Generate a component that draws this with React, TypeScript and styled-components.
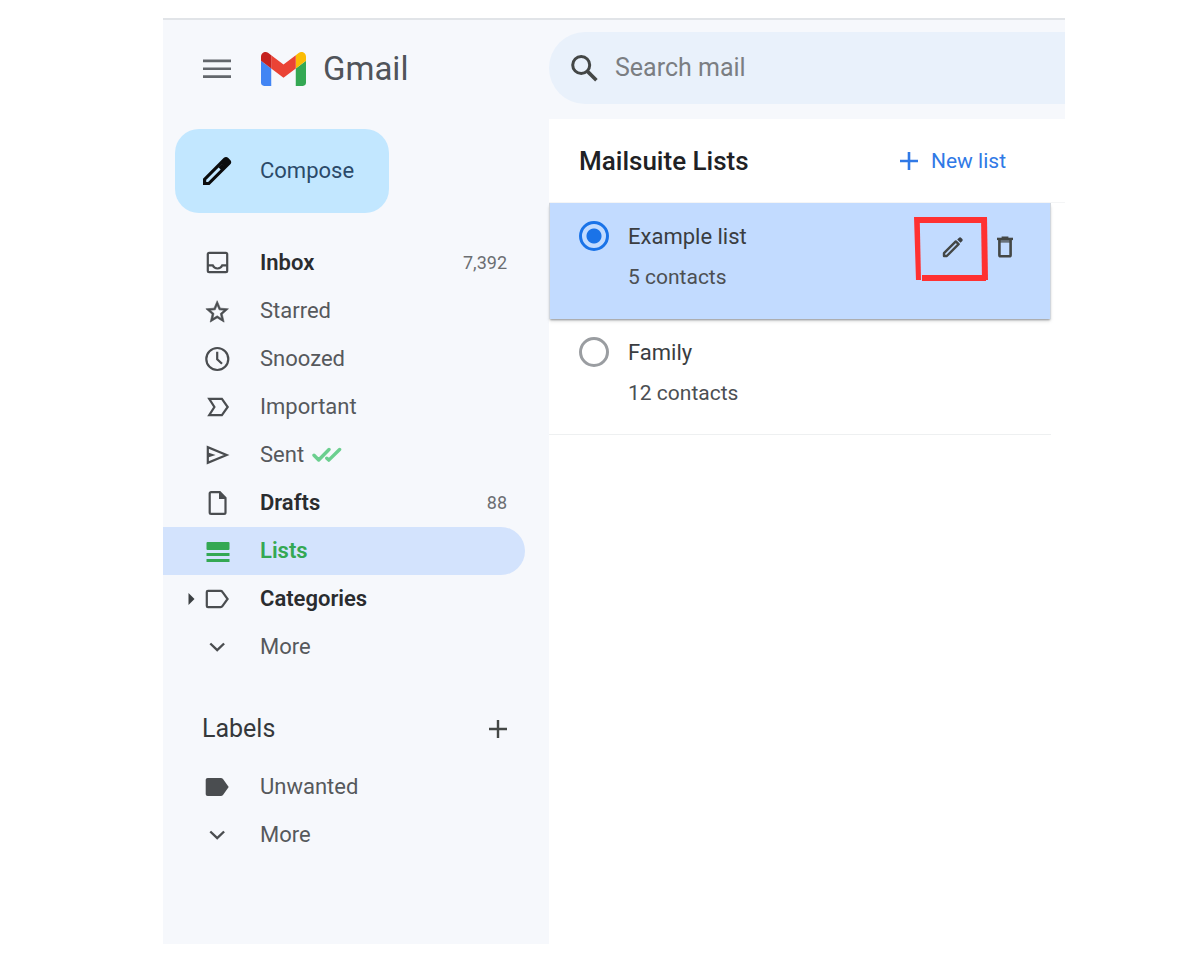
import React, { useState } from "react";
import styled, { createGlobalStyle } from "styled-components";

const GlobalStyle = createGlobalStyle`
  *, *::before, *::after { box-sizing: border-box; }
  body { margin: 0; background: #ffffff; font-family: Roboto, "Liberation Sans", sans-serif; color: #444746; }
  button, input { font: inherit; color: inherit; }
  button { background: none; border: 0; padding: 0; cursor: pointer; }
  svg { display: block; flex: none; }
`;

const Page = styled.div`
  min-height: 100vh;
  padding: 18px 135px 16px 163px;
  display: flex;
`;

const Shell = styled.div`
  flex: 1;
  display: grid;
  grid-template-columns: 386px minmax(0, 1fr);
  border-top: 2px solid #e1e4e8;
  background: #f6f8fc;
`;

const Sidebar = styled.aside`
  display: flex;
  flex-direction: column;
  align-items: stretch;
  padding-bottom: 48px;
`;

const Brand = styled.div`
  display: flex;
  align-items: center;
  height: 98px;
  padding-left: 34px;
`;

const MenuButton = styled.button`
  width: 40px;
  height: 40px;
  display: grid;
  place-items: center;
  margin-right: 24px;
`;

const BrandLink = styled.a`
  display: flex;
  align-items: center;
  gap: 17px;
  font-size: 33px;
  line-height: 40px;
  color: #50545a;
  text-decoration: none;
`;

const ComposeButton = styled.button`
  display: flex;
  align-items: center;
  gap: 28px;
  width: 214px;
  height: 84px;
  margin: 11px 0 26px 12px;
  padding-left: 27px;
  border-radius: 24px;
  background: #c2e7ff;
  color: #2b4a69;
  font-size: 22px;
  line-height: 28px;
`;

const NavList = styled.ul`
  list-style: none;
  margin: 0;
  padding: 0 24px 0 0;
`;

const NavLink = styled.a<{ $strong?: boolean; $active?: boolean }>`
  display: flex;
  align-items: center;
  height: 48px;
  padding-right: 18px;
  border-radius: 0 24px 24px 0;
  font-size: 22px;
  line-height: 28px;
  text-decoration: none;
  font-weight: ${(p) => (p.$strong ? 600 : 400)};
  color: ${(p) => (p.$active ? "#34a853" : p.$strong ? "#2a2c2f" : "#56595c")};
  background: ${(p) => (p.$active ? "#d3e3fd" : "transparent")};
`;

const CaretSlot = styled.span`
  width: 39px;
  flex: none;
  display: flex;
  justify-content: flex-end;
  padding-right: 7px;
  color: #444746;
`;

const NavLabel = styled.span`
  display: flex;
  align-items: center;
  gap: 8px;
  flex: 1;
  margin-left: 28px;
`;

const Count = styled.span`
  font-size: 18px;
  font-weight: 400;
  color: #6b6e72;
`;

const LabelsHeader = styled.div`
  display: flex;
  align-items: center;
  justify-content: space-between;
  height: 48px;
  margin: 34px 36px 10px 39px;
`;

const LabelsTitle = styled.h2`
  margin: 0;
  font-size: 25px;
  line-height: 32px;
  font-weight: 400;
  color: #35383b;
`;

const IconButton = styled.button`
  position: relative;
  width: 30px;
  height: 30px;
  display: grid;
  place-items: center;
`;

const Content = styled.div`
  display: flex;
  flex-direction: column;
`;

const SearchBar = styled.label`
  display: flex;
  align-items: center;
  gap: 16px;
  height: 72px;
  margin: 12px 0 15px;
  padding-left: 20px;
  border-radius: 36px 0 0 36px;
  background: #e9f1fb;
`;

const SearchInput = styled.input`
  flex: 1;
  min-width: 0;
  border: 0;
  outline: 0;
  padding: 0;
  background: transparent;
  font-size: 25px;
  line-height: 32px;
  color: #444746;
  &::placeholder { color: #7b7e82; opacity: 1; }
`;

const Panel = styled.main`
  flex: 1;
  background: #ffffff;
`;

const PanelHeader = styled.header`
  display: flex;
  align-items: center;
  justify-content: space-between;
  height: 84px;
  padding: 0 59px 0 30px;
  border-bottom: 1px solid #f4f5f6;
`;

const PanelTitle = styled.h1`
  margin: 0;
  font-size: 26px;
  line-height: 32px;
  font-weight: 500;
  color: #202124;
`;

const NewListButton = styled.button`
  display: flex;
  align-items: center;
  gap: 13px;
  color: #3079e6;
  font-size: 21px;
  line-height: 28px;
`;

const Lists = styled.ul`
  list-style: none;
  margin: 0 14px 0 0;
  padding: 0;
`;

const ListRow = styled.li<{ $selected: boolean }>`
  display: flex;
  justify-content: space-between;
  padding: 13px 31px 21px 30px;
  background: ${(p) => (p.$selected ? "#c2dbff" : "#ffffff")};
  box-shadow: ${(p) =>
    p.$selected
      ? "inset 1px 0 0 #d0d6de, inset -1px 0 0 #d0d6de, 0 2px 2px -1px rgba(60,64,67,.5), 0 3px 4px -1px rgba(60,64,67,.15)"
      : "inset 0 -1px 0 #eef0f1"};
  position: ${(p) => (p.$selected ? "relative" : "static")};
`;

const ListChoice = styled.label`
  display: flex;
  gap: 19px;
  cursor: pointer;
`;

const Radio = styled.input`
  appearance: none;
  width: 30px;
  height: 30px;
  margin: 5px 0 0;
  border: 3px solid #9a9da1;
  border-radius: 50%;
  &:checked {
    border-color: #1a73e8;
    background: radial-gradient(circle, #1a73e8 7px, transparent 8px);
  }
`;

const ListText = styled.span`
  display: flex;
  flex-direction: column;
  font-size: 21px;
  line-height: 41px;
  color: #4c4f53;
`;

const ListName = styled.span`
  font-size: 22px;
  color: #3a3d41;
`;

const RowActions = styled.div`
  display: flex;
  gap: 22px;
  padding-top: 16px;
`;

const Highlight = styled.svg`
  position: absolute;
  left: -24px;
  top: -16px;
  pointer-events: none;
`;

const Icon = ({ children, size = 30 }: { children: React.ReactNode; size?: number }) => (
  <svg width={size} height={size} viewBox="0 0 30 30" fill="none" stroke="currentColor" strokeWidth="2.2" aria-hidden="true">
    {children}
  </svg>
);

const dark = "#4a4d50";

const InboxIcon = () => (
  <g stroke={dark}>
    <rect x="5.8" y="4.8" width="19.4" height="19.4" rx="1.4" />
    <path d="M5.8 17.4h5c.9 2.1 2.3 3.1 4.7 3.1s3.8-1 4.7-3.1h5" />
  </g>
);
const StarIcon = () => (
  <path
    transform="translate(1.6 2.4) scale(1.13)"
    fill={dark}
    stroke={dark}
    strokeWidth=".5"
    d="M22 9.24l-7.19-.62L12 2 9.19 8.63 2 9.24l5.46 4.73L5.82 21 12 17.27 18.18 21l-1.63-7.03L22 9.24zM12 15.4l-3.76 2.27 1-4.28-3.32-2.88 4.38-.38L12 6.1l1.71 4.04 4.38.38-3.32 2.88 1 4.28L12 15.4z"
  />
);
const ClockIcon = () => (
  <g stroke={dark}>
    <circle cx="15.3" cy="15" r="11" />
    <path d="M15.2 7.8v7.4l4.8 4.6" />
  </g>
);
const ImportantIcon = () => (
  <path stroke={dark} d="M7.2 6.9h12.7l5.8 8.1-5.8 8.1H7.2l5.2-8.1z" />
);
const SentIcon = () => (
  <g stroke={dark}>
    <path d="M5.8 7.2v15.6L24.6 15z" />
    <path fill={dark} stroke="none" d="M6 12.6l7.6 2.4L6 17.4z" />
  </g>
);
const DraftIcon = () => (
  <g stroke={dark}>
    <path d="M17.8 4.2H9.1c-.8 0-1.4.6-1.4 1.4v18.8c0 .8.6 1.4 1.4 1.4h13c.8 0 1.4-.6 1.4-1.4V10z" />
    <path fill={dark} stroke="none" d="M17 4.2v6.7h7z" />
  </g>
);
const ListsIcon = () => (
  <g fill="#34a853" stroke="none">
    <rect x="4.5" y="6" width="23" height="8" rx="1" />
    <rect x="4.5" y="17" width="23" height="3" />
    <rect x="4.5" y="23" width="23" height="3" />
  </g>
);
const LabelOutline = () => (
  <path stroke={dark} d="M6 6.9h12.6c.8 0 1.4.3 1.8.9l5.2 7.2-5.2 7.2c-.4.6-1 .9-1.800.9H6c-.7 0-1.200-.5-1.200-1.200V8.100c0-.7.5-1.200 1.200-1.200z" />
);
const LabelSolid = () => (
  <path stroke="none" fill={dark} d="M5.700 6h13c1 0 1.800.4 2.300 1.100L26.700 15 21 22.900c-.5.7-1.300 1.100-2.300 1.100h-13c-1.200 0-2-.8-2-2V8c0-1.200.8-2 2-2z" />
);
const ChevronIcon = () => <path stroke={dark} strokeWidth="2.4" d="M8.300 11.500l6.900 6.600 6.900-6.600" />;

const MenuIcon = () => (
  <svg width="28" height="20" viewBox="0 0 28 20" fill="#63676c" aria-hidden="true">
    <path d="M0 0.500h28v2.700H0zM0 8.400h28v2.700H0zM0 16.200h28v2.700H0z" />
  </svg>
);

const GmailLogo = () => (
  <svg width="45" height="34" viewBox="52 42 88 66" aria-hidden="true">
    <path fill="#4285f4" d="M58 108h14V74L52 59v43c0 3.320 2.690 6 6 6" />
    <path fill="#34a853" d="M120 108h14c3.320 0 6-2.690 6-6V59l-20 15" />
    <path fill="#fbbc04" d="M120 48v26l20-15v-8c0-7.420-8.470-11.650-14.400-7.200" />
    <path fill="#ea4335" d="M72 74V48l24 18 24-18v26L96 92" />
    <path fill="#c5221f" d="M52 51v8l20 15V48l-5.600-4.200c-5.940-4.450-14.400-.22-14.400 7.200" />
  </svg>
);

const ComposeIcon = () => (
  <svg width="30" height="30" viewBox="0 0 30 30" aria-hidden="true">
    <path
      fill="#0b0c0d"
      fillRule="evenodd"
      d="M1 29v-6.300L21.600 2.100c1.500-1.500 3.300-1.500 4.700-.1l1.900 1.900c1.400 1.400 1.400 3.200-.1 4.700L7.500 29zM4.200 26h2.200L22 10.300 19.800 8 4.200 23.700z"
    />
    <path fill="#0b0c0d" d="M16.500 11.300L20 7.500l2.800 2.800-3.700 3.600z" />
    <path stroke="#0b0c0d" strokeWidth="1.400" d="M3.800 23L19 8M6.800 26.400L22.500 11" />
  </svg>
);

const PlusIcon = ({ width }: { width: number }) => (
  <svg width="18" height="18" viewBox="0 0 18 18" fill="none" stroke="currentColor" strokeWidth={width} aria-hidden="true">
    <path d="M9 0v18M0 9h18" />
  </svg>
);

const SearchIcon = () => (
  <svg width="30" height="30" viewBox="0 0 30 30" fill="none" stroke="#444746" aria-hidden="true">
    <circle cx="12.200" cy="12" r="8.500" strokeWidth="3" />
    <path d="M18 17.900l9.400 9.300" strokeWidth="3.600" />
  </svg>
);

const DoubleCheck = () => (
  <svg width="30" height="16" viewBox="0 0 30 16" fill="none" stroke="#6bcf8f" strokeWidth="3.400" aria-label="Tracked">
    <path d="M2 8.200l4.700 4.800L17 2.500M14.800 11.200l2 1.900L27.600 2.500" strokeLinecap="round" strokeLinejoin="round" />
  </svg>
);

const Caret = () => (
  <svg width="7" height="12" viewBox="0 0 7 12" aria-hidden="true">
    <path fill="#3c4043" d="M.5 0L6.500 6 .5 12z" />
  </svg>
);

const EditIcon = () => (
  <svg width="22" height="22" viewBox="0 0 22 22" fill="none" aria-hidden="true">
    <path stroke="#444746" strokeWidth="2.400" strokeLinejoin="round" d="M2 20v-2.800L13.800 5.400l2.800 2.800L4.800 20z" />
    <path fill="#3c4043" d="M15.200 3.500l1.600-1.600c.8-.8 1.800-.8 2.500 0l.8.8c.8.800.8 1.700 0 2.500l-1.600 1.600z" />
  </svg>
);

const TrashIcon = () => (
  <svg width="18" height="22" viewBox="0 0 18 22" fill="none" stroke="#444746" aria-hidden="true">
    <path strokeWidth="2.400" d="M1 2.900h16" />
    <path strokeWidth="2" d="M5.600 1.500h6.800" />
    <path strokeWidth="2.600" d="M3.400 4v15c0 .8.500 1.300 1.300 1.300h8.600c.8 0 1.300-.5 1.300-1.300V4" />
    <path strokeWidth="2.800" d="M3.400 5.300h11.200" opacity=".7" />
  </svg>
);

const MarkerBox = () => (
  <Highlight width="74" height="66" viewBox="0 0 74 66" fill="#ff3131" aria-hidden="true">
    <path d="M0 1h5.700l1.300 63H2z" />
    <path d="M1 1h70v6H1z" />
    <path d="M67 1h6l1 63h-6z" />
    <path d="M8 59h64v6H8z" />
  </Highlight>
);

type Item = { label: string; icon: React.FC; count?: string; strong?: boolean; active?: boolean; caret?: boolean; tracked?: boolean };

const mailItems: Item[] = [
  { label: "Inbox", icon: InboxIcon, count: "7,392", strong: true },
  { label: "Starred", icon: StarIcon },
  { label: "Snoozed", icon: ClockIcon },
  { label: "Important", icon: ImportantIcon },
  { label: "Sent", icon: SentIcon, tracked: true },
  { label: "Drafts", icon: DraftIcon, count: "88", strong: true },
  { label: "Lists", icon: ListsIcon, strong: true, active: true },
  { label: "Categories", icon: LabelOutline, strong: true, caret: true },
  { label: "More", icon: ChevronIcon },
];

const labelItems: Item[] = [
  { label: "Unwanted", icon: LabelSolid },
  { label: "More", icon: ChevronIcon },
];

const Nav = ({ items }: { items: Item[] }) => (
  <NavList>
    {items.map(({ label, icon: Glyph, count, strong, active, caret, tracked }) => (
      <li key={label}>
        <NavLink href="#" $strong={strong} $active={active} aria-current={active ? "page" : undefined}>
          <CaretSlot>{caret && <Caret />}</CaretSlot>
          <Icon><Glyph /></Icon>
          <NavLabel>{label}{tracked && <DoubleCheck />}</NavLabel>
          {count && <Count>{count}</Count>}
        </NavLink>
      </li>
    ))}
  </NavList>
);

const contactLists = [
  { name: "Example list", contacts: 5 },
  { name: "Family", contacts: 12 },
];

export default function App() {
  const [selected, setSelected] = useState("Example list");
  return (
    <Page>
      <GlobalStyle />
      <Shell>
        <Sidebar>
          <Brand>
            <MenuButton aria-label="Main menu"><MenuIcon /></MenuButton>
            <BrandLink href="#"><GmailLogo />Gmail</BrandLink>
          </Brand>
          <ComposeButton><ComposeIcon />Compose</ComposeButton>
          <nav aria-label="Mailboxes"><Nav items={mailItems} /></nav>
          <LabelsHeader>
            <LabelsTitle>Labels</LabelsTitle>
            <IconButton aria-label="Create label"><PlusIcon width={2.4} /></IconButton>
          </LabelsHeader>
          <nav aria-label="Labels"><Nav items={labelItems} /></nav>
        </Sidebar>
        <Content>
          <SearchBar>
            <SearchIcon />
            <SearchInput type="search" placeholder="Search mail" aria-label="Search mail" />
          </SearchBar>
          <Panel>
            <PanelHeader>
              <PanelTitle>Mailsuite Lists</PanelTitle>
              <NewListButton><PlusIcon width={2.6} />New list</NewListButton>
            </PanelHeader>
            <Lists>
              {contactLists.map(({ name, contacts }) => (
                <ListRow key={name} $selected={selected === name}>
                  <ListChoice>
                    <Radio type="radio" name="list" checked={selected === name} onChange={() => setSelected(name)} />
                    <ListText>
                      <ListName>{name}</ListName>
                      <span>{contacts} contacts</span>
                    </ListText>
                  </ListChoice>
                  {selected === name && (
                    <RowActions>
                      <IconButton aria-label="Edit list"><EditIcon /><MarkerBox /></IconButton>
                      <IconButton aria-label="Delete list"><TrashIcon /></IconButton>
                    </RowActions>
                  )}
                </ListRow>
              ))}
            </Lists>
          </Panel>
        </Content>
      </Shell>
    </Page>
  );
}
